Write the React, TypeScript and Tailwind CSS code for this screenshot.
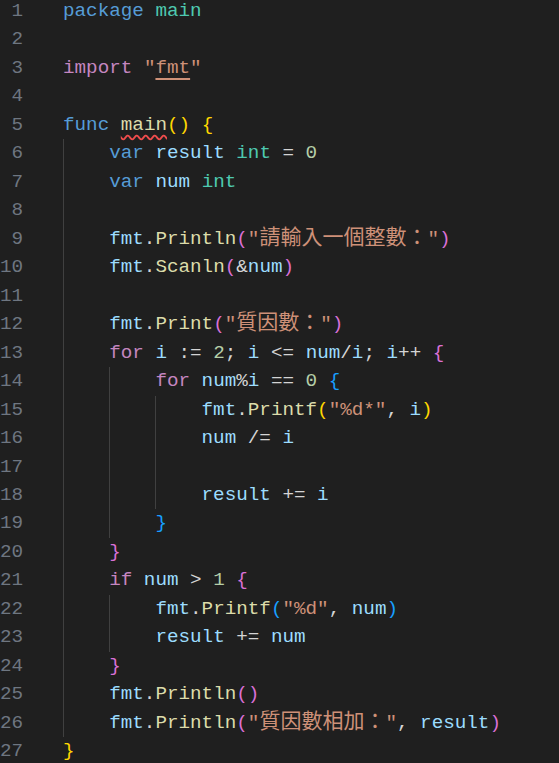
type Tok = [string, string?];

const KW = 'text-[#569cd6]';
const CTRL = 'text-[#c586c0]';
const TYPE = 'text-[#4ec9b0]';
const FN = 'text-[#dcdcaa]';
const VAR = 'text-[#9cdcfe]';
const STR = 'text-[#ce9178]';
const NUM = 'text-[#b5cea8]';
const OP = 'text-[#d4d4d4]';
const B1 = 'text-[#ffd700]';
const B2 = 'text-[#da70d6]';
const B3 = 'text-[#179fff]';
const CJK = 'text-[#ce9178] text-[21px] leading-none [font-family:"Noto_Sans_CJK_TC","Noto_Sans_CJK_JP",sans-serif]';

const lines: { indent: number; toks: Tok[] }[] = [
  { indent: 0, toks: [['package', KW], [' '], ['main', TYPE]] },
  { indent: 0, toks: [] },
  {
    indent: 0,
    toks: [
      ['import', CTRL],
      [' '],
      ['"', STR],
      ['fmt', `${STR} underline decoration-2 underline-offset-[5px]`],
      ['"', STR],
    ],
  },
  { indent: 0, toks: [] },
  {
    indent: 0,
    toks: [
      ['func', KW],
      [' '],
      ['main', `${FN} underline decoration-wavy decoration-[#f14c4c] underline-offset-[4px]`],
      ['(', B1],
      [')', B1],
      [' '],
      ['{', B1],
    ],
  },
  { indent: 1, toks: [['var', KW], [' '], ['result', VAR], [' '], ['int', TYPE], [' = ', OP], ['0', NUM]] },
  { indent: 1, toks: [['var', KW], [' '], ['num', VAR], [' '], ['int', TYPE]] },
  { indent: 1, toks: [] },
  {
    indent: 1,
    toks: [['fmt', VAR], ['.', OP], ['Println', FN], ['(', B2], ['"', STR], ['請輸入一個整數：', CJK], ['"', STR], [')', B2]],
  },
  { indent: 1, toks: [['fmt', VAR], ['.', OP], ['Scanln', FN], ['(', B2], ['&', OP], ['num', VAR], [')', B2]] },
  { indent: 1, toks: [] },
  {
    indent: 1,
    toks: [['fmt', VAR], ['.', OP], ['Print', FN], ['(', B2], ['"', STR], ['質因數：', CJK], ['"', STR], [')', B2]],
  },
  {
    indent: 1,
    toks: [
      ['for', CTRL],
      [' '],
      ['i', VAR],
      [' := ', OP],
      ['2', NUM],
      ['; ', OP],
      ['i', VAR],
      [' <= ', OP],
      ['num', VAR],
      ['/', OP],
      ['i', VAR],
      ['; ', OP],
      ['i', VAR],
      ['++ ', OP],
      ['{', B2],
    ],
  },
  {
    indent: 2,
    toks: [['for', CTRL], [' '], ['num', VAR], ['%', OP], ['i', VAR], [' == ', OP], ['0', NUM], [' '], ['{', B3]],
  },
  {
    indent: 3,
    toks: [['fmt', VAR], ['.', OP], ['Printf', FN], ['(', B1], ['"%d*"', STR], [', ', OP], ['i', VAR], [')', B1]],
  },
  { indent: 3, toks: [['num', VAR], [' /= ', OP], ['i', VAR]] },
  { indent: 3, toks: [] },
  { indent: 3, toks: [['result', VAR], [' += ', OP], ['i', VAR]] },
  { indent: 2, toks: [['}', B3]] },
  { indent: 1, toks: [['}', B2]] },
  { indent: 1, toks: [['if', CTRL], [' '], ['num', VAR], [' > ', OP], ['1', NUM], [' '], ['{', B2]] },
  {
    indent: 2,
    toks: [['fmt', VAR], ['.', OP], ['Printf', FN], ['(', B3], ['"%d"', STR], [', ', OP], ['num', VAR], [')', B3]],
  },
  { indent: 2, toks: [['result', VAR], [' += ', OP], ['num', VAR]] },
  { indent: 1, toks: [['}', B2]] },
  { indent: 1, toks: [['fmt', VAR], ['.', OP], ['Println', FN], ['(', B2], [')', B2]] },
  {
    indent: 1,
    toks: [
      ['fmt', VAR],
      ['.', OP],
      ['Println', FN],
      ['(', B2],
      ['"', STR],
      ['質因數相加：', CJK],
      ['"', STR],
      [', ', OP],
      ['result', VAR],
      [')', B2],
    ],
  },
  { indent: 0, toks: [['}', B1]] },
];

function CodeLine({ n, indent, toks }: { n: number; indent: number; toks: Tok[] }) {
  return (
    <div className="flex h-[28.48px] leading-[28.48px]">
      <span className="w-[63px] shrink-0 pr-[40px] text-right text-[#6e7681]">{n}</span>
      {Array.from({ length: indent }).map((_, i) => (
        <span key={i} className="w-[46.2px] shrink-0 border-l border-[#404040]" />
      ))}
      <span className="whitespace-pre">
        {toks.map(([t, c], i) => (
          <span key={i} className={c ?? OP}>
            {t}
          </span>
        ))}
      </span>
    </div>
  );
}

export default function App() {
  return (
    <div className="h-[763px] w-[559px] overflow-hidden bg-[#1f1f1f] font-['Liberation_Mono',monospace] text-[19.25px]">
      <div className="-mt-[3px]">
        {lines.map((l, i) => (
          <CodeLine key={i} n={i + 1} indent={l.indent} toks={l.toks} />
        ))}
      </div>
    </div>
  );
}
